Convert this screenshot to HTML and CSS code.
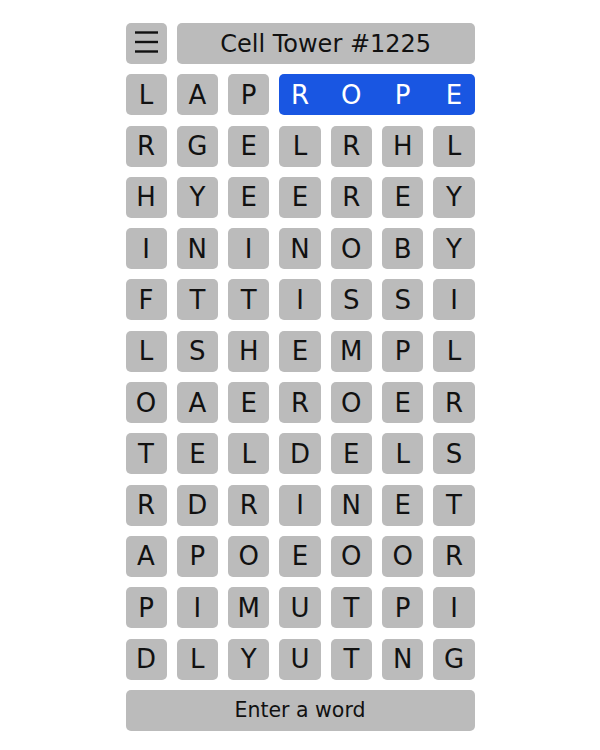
FILE: index.html
```html
<!DOCTYPE html>
<html lang="en">
<head>
    <meta charset="UTF-8">
    <meta name="viewport" content="width=device-width, initial-scale=1.0">
    <title>Cell Tower #1225</title>
    <link rel="stylesheet" href="styles.css">
</head>
<body>
    <div class="board">
        <!-- header row -->
        <button class="cell menu" aria-label="Menu">
            <svg width="23" height="22" viewBox="0 0 23 22">
                <line x1="0" y1="1.5" x2="23" y2="1.5" stroke="#111" stroke-width="2.4"/>
                <line x1="0" y1="11" x2="23" y2="11" stroke="#111" stroke-width="2.4"/>
                <line x1="0" y1="20.5" x2="23" y2="20.5" stroke="#111" stroke-width="2.4"/>
            </svg>
        </button>
        <div class="cell title">Cell Tower #1225</div>

        <!-- row 1 -->
        <div class="cell">L</div>
        <div class="cell">A</div>
        <div class="cell">P</div>
        <div class="cell word">
            <span>R</span><span>O</span><span>P</span><span>E</span>
        </div>

        <div class="cell">R</div><div class="cell">G</div><div class="cell">E</div><div class="cell">L</div><div class="cell">R</div><div class="cell">H</div><div class="cell">L</div>
        <div class="cell">H</div><div class="cell">Y</div><div class="cell">E</div><div class="cell">E</div><div class="cell">R</div><div class="cell">E</div><div class="cell">Y</div>
        <div class="cell">I</div><div class="cell">N</div><div class="cell">I</div><div class="cell">N</div><div class="cell">O</div><div class="cell">B</div><div class="cell">Y</div>
        <div class="cell">F</div><div class="cell">T</div><div class="cell">T</div><div class="cell">I</div><div class="cell">S</div><div class="cell">S</div><div class="cell">I</div>
        <div class="cell">L</div><div class="cell">S</div><div class="cell">H</div><div class="cell">E</div><div class="cell">M</div><div class="cell">P</div><div class="cell">L</div>
        <div class="cell">O</div><div class="cell">A</div><div class="cell">E</div><div class="cell">R</div><div class="cell">O</div><div class="cell">E</div><div class="cell">R</div>
        <div class="cell">T</div><div class="cell">E</div><div class="cell">L</div><div class="cell">D</div><div class="cell">E</div><div class="cell">L</div><div class="cell">S</div>
        <div class="cell">R</div><div class="cell">D</div><div class="cell">R</div><div class="cell">I</div><div class="cell">N</div><div class="cell">E</div><div class="cell">T</div>
        <div class="cell">A</div><div class="cell">P</div><div class="cell">O</div><div class="cell">E</div><div class="cell">O</div><div class="cell">O</div><div class="cell">R</div>
        <div class="cell">P</div><div class="cell">I</div><div class="cell">M</div><div class="cell">U</div><div class="cell">T</div><div class="cell">P</div><div class="cell">I</div>
        <div class="cell">D</div><div class="cell">L</div><div class="cell">Y</div><div class="cell">U</div><div class="cell">T</div><div class="cell">N</div><div class="cell">G</div>

        <div class="cell entry">Enter a word</div>
    </div>
</body>
</html>
```

FILE: styles.css
```css
body {
    margin: 0;
    background: #fff;
    font-family: "DejaVu Sans", sans-serif;
    color: #111;
}
.board {
    width: 349px;
    margin: 23px auto 0;
    display: grid;
    grid-template-columns: repeat(7, 1fr);
    grid-auto-rows: 41px;
    gap: 10.3px;
}
.cell {
    background: #bbbbbb;
    border-radius: 5px;
    display: flex;
    align-items: center;
    justify-content: center;
    font-size: 26px;
    line-height: 1;
}
.menu {
    border: none;
    padding: 0;
    cursor: pointer;
}
.menu svg {
    display: block;
    margin-top: -4px;
}
.title {
    grid-column: span 6;
    font-size: 24px;
}
.word {
    grid-column: span 4;
    background: #1956e2;
    color: #fff;
    display: grid;
    grid-template-columns: repeat(4, 1fr);
    gap: 10.3px;
    justify-items: center;
}
.entry {
    grid-column: span 7;
    font-size: 20.5px;
}
```
